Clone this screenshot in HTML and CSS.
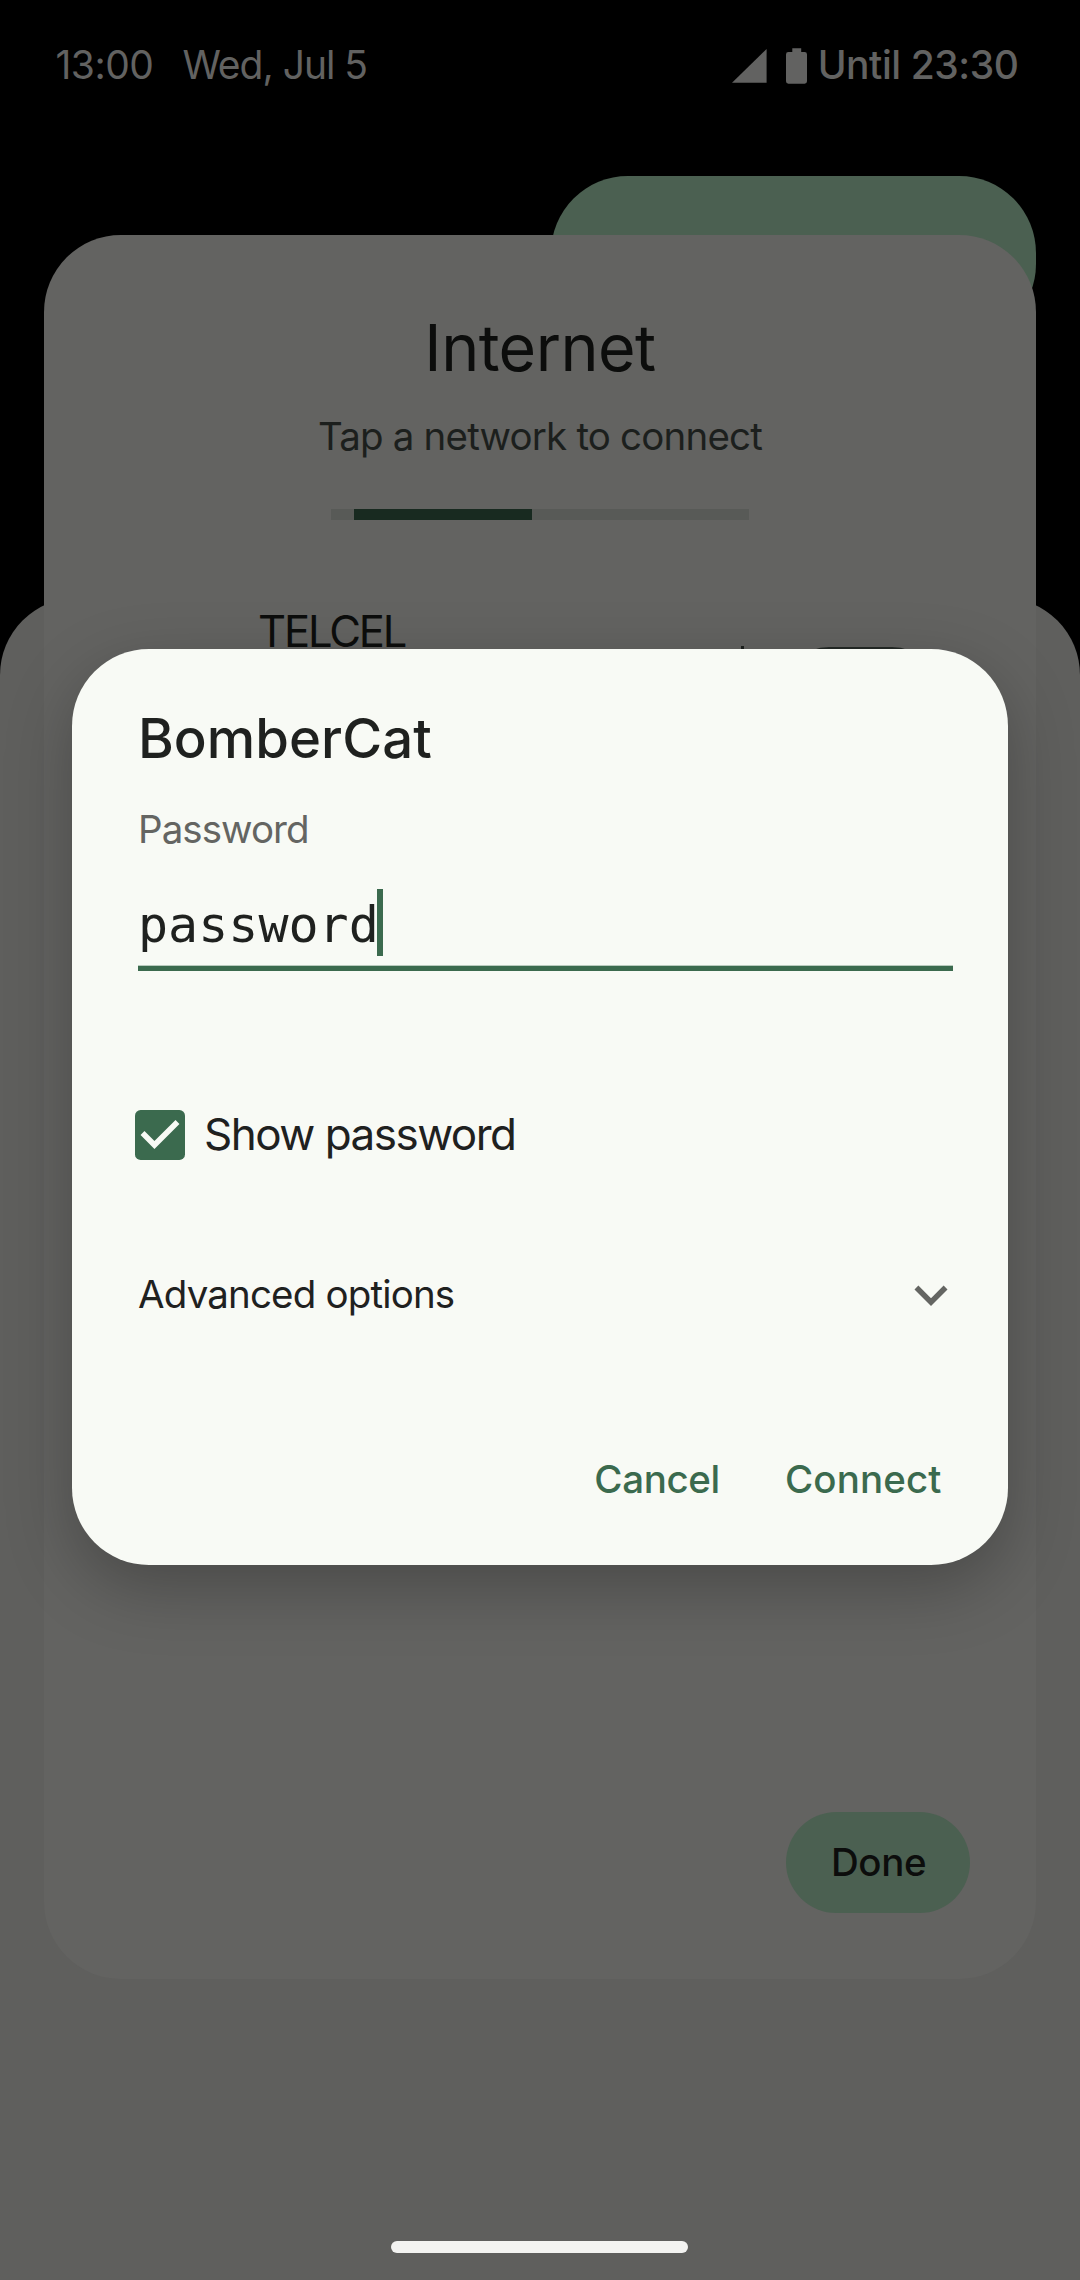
FILE: index.html
```
<!DOCTYPE html>
<html lang="en">
<head>
<meta charset="utf-8">
<title>Internet</title>
<link rel="stylesheet" href="styles.css">
</head>
<body>
<div class="screen">
  <header class="status">
    <span class="status-time">13:00</span>
    <span class="status-date">Wed, Jul 5</span>
    <svg class="status-signal" viewBox="0 0 35 34"><path d="M34.600 0V33.700H0z"/></svg>
    <svg class="status-battery" viewBox="0 0 21 36"><path d="M6.300 0.300h8.900v3.700h3.400a2.400 2.400 0 0 1 2.400 2.400v26.900a2.400 2.400 0 0 1-2.400 2.400H2.400A2.400 2.400 0 0 1 0 33.300V6.400a2.400 2.400 0 0 1 2.400-2.400h3.900z"/></svg>
    <span class="status-until">Until 23:30</span>
  </header>

  <div class="tile"></div>
  <div class="shade"></div>

  <section class="internet">
    <h1 class="internet-title">Internet</h1>
    <p class="internet-hint">Tap a network to connect</p>
    <div class="progress"><div class="progress-bar"></div></div>
    <div class="carrier">
      <span class="carrier-name">TELCEL</span>
      <span class="carrier-divider"></span>
      <span class="carrier-switch"></span>
    </div>
    <button class="done">Done</button>
  </section>

  <section class="dialog">
    <h2 class="dialog-title">BomberCat</h2>
    <label class="dialog-label">Password</label>
    <div class="field">
      <span class="field-text">password</span>
      <span class="field-cursor"></span>
    </div>
    <div class="check">
      <svg class="check-box" viewBox="3 3 18 18">
        <rect x="3" y="3" width="18" height="18" rx="2" fill="#3b6a4e"/>
        <path fill="#f8faf5" d="M10 17l-5-5 1.410-1.410L10 14.170l7.590-7.590L19 8z"/>
      </svg>
      <span class="check-label">Show password</span>
    </div>
    <div class="advanced">
      <span class="advanced-label">Advanced options</span>
      <svg class="advanced-icon" viewBox="0 0 24 24"><path d="M7.410 8.590L12 13.170l4.590-4.580L18 10l-6 6-6-6z"/></svg>
    </div>
    <div class="actions">
      <button class="action action-cancel">Cancel</button>
      <button class="action action-connect">Connect</button>
    </div>
  </section>

  <div class="nav-handle"></div>
</div>
</body>
</html>
```
FILE: styles.css
```
* {
  box-sizing: border-box;
}

body {
  margin: 0;
  background: #000;
  font-family: Inter, Roboto, sans-serif;
}

h1, h2, p {
  margin: 0;
  font-weight: 400;
}

button {
  border: 0;
  padding: 0;
  background: none;
  font: inherit;
  white-space: nowrap;
}

span, label {
  white-space: nowrap;
}

svg {
  display: block;
  flex: none;
}

/* Every layer shares the single grid cell and is offset by its margins. */
.screen {
  display: grid;
  width: 1080px;
  height: 2280px;
  overflow: hidden;
  background: #000;
}

.screen > * {
  grid-area: 1 / 1;
}

.status {
  display: flex;
  align-items: flex-start;
  height: 90px;
  padding: 45px 61.500px 0 55.500px;
  font-size: 39px;
  line-height: 40px;
  color: #626261;
}

.status-time {
  letter-spacing: -0.500px;
}

.status-date {
  margin-left: 29px;
  letter-spacing: -1.010px;
}

.status-signal {
  width: 35px;
  height: 34px;
  margin: 4px 19px 0 auto;
  fill: #626261;
}

.status-battery {
  width: 21px;
  height: 36px;
  margin: 3px 11px 0 0;
  fill: #626261;
}

.status-until {
  font-weight: 500;
  letter-spacing: -0.430px;
}

.tile {
  width: 485px;
  height: 165px;
  margin: 176px 0 0 551px;
  border-radius: 77px;
  background: #4b6051;
}

.shade {
  margin-top: 598px;
  border-radius: 77px 77px 0 0;
  background: #5f5f5d;
}

.internet {
  display: flex;
  flex-direction: column;
  height: 1744px;
  margin: 235px 44px 0;
  padding: 73px 66px 66px;
  border-radius: 77px;
  background: #636361;
  color: #0c0d0c;
}

.internet-title {
  font-size: 64.500px;
  line-height: 81px;
  letter-spacing: -0.540px;
  text-align: center;
}

.internet-hint {
  margin-top: 22px;
  font-size: 38.500px;
  line-height: 50px;
  letter-spacing: -0.810px;
  text-align: center;
  color: #1c1f1d;
}

.progress {
  align-self: center;
  width: 418px;
  height: 11px;
  margin-top: 48px;
  padding-left: 23.300px;
  background: #585a57;
}

.progress-bar {
  width: 178px;
  height: 11px;
  background: #182a20;
}

.carrier {
  display: flex;
  height: 176px;
  margin-top: 83px;
  padding-left: 148px;
}

.carrier-name {
  width: 483px;
  font-size: 43.500px;
  line-height: 57px;
  letter-spacing: -2.140px;
}

.carrier-divider {
  width: 3px;
  height: 88px;
  margin-top: 43px;
  background: #1c1f1d;
}

.carrier-switch {
  width: 151px;
  height: 88px;
  margin: 44px 0 0 41px;
  border: 5px solid #252a27;
  border-radius: 44px;
}

.done {
  align-self: flex-end;
  width: 184px;
  height: 101px;
  margin-top: auto;
  padding-left: 1px;
  border-radius: 51px;
  background: #4b6051;
  font-size: 38.500px;
  font-weight: 500;
  line-height: 101px;
  letter-spacing: -0.400px;
  color: #0c0d0c;
}

.dialog {
  display: flex;
  flex-direction: column;
  height: 916px;
  margin: 649px 72px 0;
  padding: 53px 55px 0 66px;
  border-radius: 77px;
  background: #f8faf5;
  box-shadow: 0 22px 66px rgba(0, 0, 0, 0.260);
  color: #1f211f;
}

.dialog-title {
  font-size: 54.500px;
  font-weight: 500;
  line-height: 72px;
  letter-spacing: 0.060px;
}

.dialog-label {
  margin-top: 30px;
  font-size: 38.500px;
  line-height: 50px;
  letter-spacing: -0.940px;
  color: #646562;
}

.field {
  display: flex;
  align-items: flex-start;
  height: 82px;
  margin-top: 35px;
  background: linear-gradient(#b9cbbe 0 1px, #3b6a4e 1px) bottom / 100% 6px no-repeat;
}

.field-text {
  font-family: "DejaVu Sans Mono", monospace;
  font-size: 50px;
  line-height: 73px;
}

.field-cursor {
  width: 6px;
  height: 67px;
  margin-left: -2px;
  background: #3b6a4e;
}

.check {
  display: flex;
  align-items: flex-start;
  gap: 19px;
  margin: 139px 0 0 -3px;
}

.check-box {
  width: 50px;
  height: 50px;
}

.check-label {
  font-size: 44px;
  line-height: 48px;
  letter-spacing: -1.510px;
}

.advanced {
  display: flex;
  align-items: center;
  justify-content: space-between;
  margin: 102px -11px 0 0;
}

.advanced-label {
  padding-bottom: 2px;
  font-size: 38.500px;
  line-height: 50px;
  letter-spacing: -0.840px;
}

.advanced-icon {
  width: 66px;
  height: 66px;
  fill: #646562;
}

.actions {
  display: flex;
  justify-content: flex-end;
  gap: 65px;
  margin-top: 126px;
  padding-right: 11.500px;
}

.action {
  font-size: 38.500px;
  font-weight: 500;
  line-height: 50px;
  color: #3b6a4e;
}

.action-cancel {
  letter-spacing: -0.360px;
}

.action-connect {
  letter-spacing: 0.110px;
}

.nav-handle {
  width: 297px;
  height: 12px;
  margin: 2241px 0 0 391px;
  border-radius: 6px;
  background: #f3f3f1;
}
```
